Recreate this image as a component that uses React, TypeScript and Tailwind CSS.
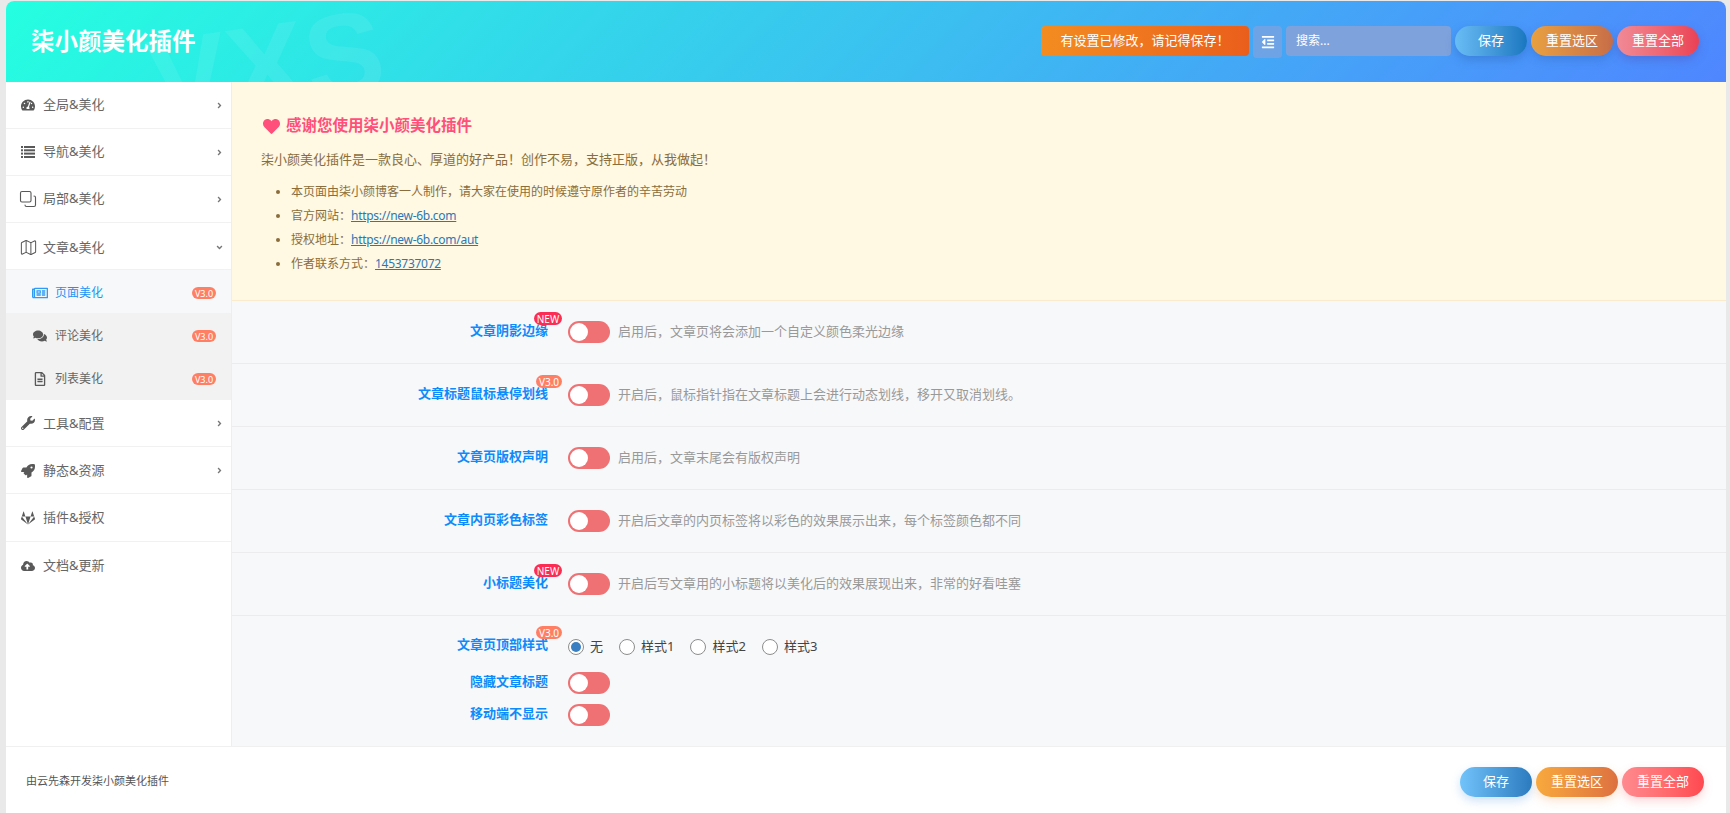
import type { ReactNode } from 'react'
import { Copy, Map as MapIcon } from 'lucide-react'
import { FaAngleDown, FaAngleRight, FaCloudUploadAlt, FaComments, FaGitlab, FaHeart, FaOutdent, FaRegFileAlt, FaRegNewspaper, FaRocket, FaTachometerAlt, FaWrench } from 'react-icons/fa'

const font = "font-['Noto_Sans','Noto_Sans_CJK_SC',sans-serif]"

function NavItem({ icon, label, arrow, tall, className }: { icon: ReactNode; label: string; arrow?: 'right' | 'down'; tall?: boolean; className?: string }) {
  return (
    <div className={`flex items-center border-b border-[#f1f1f1] pl-[15px] pr-[7px] text-[13px] text-[#666] ${tall ? 'h-[47.4px] pt-[1px]' : 'h-[47px]'} ${className ?? ''}`}>
      <span className="flex w-[14px] justify-center text-[14px] text-[#595959] [&>svg]:shrink-0">{icon}</span>
      <span className="ml-[8px] flex-1">{label}</span>
      {arrow === 'right' && <FaAngleRight className="text-[9px] text-[#777]" />}
      {arrow === 'down' && <FaAngleDown className="text-[9px] text-[#777]" />}
    </div>
  )
}

function SubItem({ icon, label, active }: { icon: ReactNode; label: string; active?: boolean }) {
  return (
    <div className={`flex h-[43.2px] items-center pl-[27px] pr-[15px] pt-[3px] text-[12px] ${active ? 'bg-[#f7f8fa] text-[#1c94f4]' : 'bg-[#f2f2f2] text-[#666]'}`}>
      <span className={`flex w-[14px] justify-center [&>svg]:shrink-0 ${active ? 'text-[16px] text-[#2f9bf5]' : 'text-[14px] text-[#595959]'}`}>{icon}</span>
      <span className="ml-[8px] flex-1">{label}</span>
      <span className="flex h-[12px] w-[24px] items-center justify-center rounded-full bg-[#ff7f65] text-[9px] leading-none text-white">V3.0</span>
    </div>
  )
}

function ListIcon() {
  return (
    <svg width="14" height="12" viewBox="0 0 14 12" fill="currentColor">
      <rect x="0" y="0" width="2" height="2" />
      <rect x="3" y="0" width="11" height="2" />
      <rect x="0" y="3.3" width="2" height="2" />
      <rect x="3" y="3.3" width="11" height="2" />
      <rect x="0" y="6.6" width="2" height="2" />
      <rect x="3" y="6.6" width="11" height="2" />
      <rect x="0" y="10" width="2" height="2" />
      <rect x="3" y="10" width="11" height="2" />
    </svg>
  )
}

function Switch() {
  return (
    <span className="flex h-[22px] w-[42px] shrink-0 items-center rounded-full bg-[#ef7174] pl-[2px]">
      <span className="h-[18px] w-[18px] rounded-full bg-white" />
    </span>
  )
}

function Label({ text, badge, className }: { text: string; badge?: 'NEW' | 'V3.0'; className?: string }) {
  return (
    <div className={`flex w-[316px] shrink-0 justify-end ${className ?? ''}`}>
      <span className="relative text-[13px] font-bold leading-[20px] text-[#0d8bfb]">
        {text}
        {badge && (
          <span className={`absolute right-[-14px] top-[-8px] flex h-[13px] items-center justify-center rounded-full text-[10px] font-normal leading-none text-white ${badge === 'NEW' ? 'w-[28px] bg-[#fb2d55]' : 'w-[26px] bg-[#ff7f65]'}`}>
            {badge}
          </span>
        )}
      </span>
    </div>
  )
}

function OptionRow({ label, badge, desc }: { label: string; badge?: 'NEW' | 'V3.0'; desc: string }) {
  return (
    <div className="flex h-[63px] items-center border-b border-[#ececef]">
      <Label text={label} badge={badge} className="pb-[4px]" />
      <div className="ml-[20px]">
        <Switch />
      </div>
      <span className="ml-[8px] text-[13px] text-[#999]">{desc}</span>
    </div>
  )
}

function Radio({ label, checked }: { label: string; checked?: boolean }) {
  return (
    <span className="flex items-center text-[13px] text-[#444]">
      <span className="flex h-[16px] w-[16px] items-center justify-center rounded-full border border-[#8d8d8d] bg-white">
        {checked && <span className="h-[10px] w-[10px] rounded-full bg-[#3a7fc1]" />}
      </span>
      <span className="ml-[6px]">{label}</span>
    </span>
  )
}

function Pill({ label, className }: { label: string; className: string }) {
  return (
    <button className={`h-[30px] rounded-full text-[13px] text-white ${className}`}>{label}</button>
  )
}

function Bullet({ children }: { children: ReactNode }) {
  return (
    <li className="flex items-center">
      <span className="mr-[11px] h-[4px] w-[4px] rounded-full bg-[#8a6d3b]" />
      <span>{children}</span>
    </li>
  )
}

export default function App() {
  return (
    <div className={`h-[813px] overflow-hidden bg-[#e9e9e9] pb-0 pl-[6px] pr-[4px] pt-px ${font}`}>
      <div className="flex h-full flex-col overflow-hidden rounded-t-[8px] bg-white">
        <header className="relative flex h-[81px] shrink-0 items-center justify-between overflow-hidden bg-[linear-gradient(135deg,#25ffe0,#4f86ff)] pl-[25px] pr-[27px]">
          <div className="absolute left-[142px] top-[6px] -rotate-[8deg] select-none font-['Liberation_Sans',sans-serif] text-[118px] font-bold leading-none text-white/[0.08]">VXS</div>
          <h1 className="relative text-[23.5px] font-bold text-white">柒小颜美化插件</h1>
          <div className="relative flex items-start gap-[4px]">
            <div className="flex h-[30px] w-[208px] items-center justify-center rounded-[4px] bg-gradient-to-r from-[#f38c21] to-[#ea5e1c] text-[13px] text-white">有设置已修改，请记得保存！</div>
            <div className="flex h-[32px] w-[29px] items-center justify-center rounded-[4px] bg-[#6ea4e6] text-[14px] text-white">
              <FaOutdent />
            </div>
            <input placeholder="搜索..." className="h-[30px] w-[165px] rounded-[4px] bg-[#7ea2dc] px-[10px] text-[12px] text-white outline-none placeholder:text-white" />
            <Pill label="保存" className="w-[72px] bg-gradient-to-r from-[#69bdf5] to-[#1a78c0] shadow-[0_4px_10px_rgba(40,90,170,0.35)]" />
            <Pill label="重置选区" className="w-[82px] bg-gradient-to-r from-[#e8a040] to-[#c86e48] shadow-[0_4px_10px_rgba(40,90,170,0.3)]" />
            <Pill label="重置全部" className="w-[82px] bg-gradient-to-r from-[#f08a96] to-[#ea4055] shadow-[0_4px_10px_rgba(80,70,170,0.35)]" />
          </div>
        </header>

        <div className="flex min-h-0 flex-1">
          <aside className="w-[226px] shrink-0 border-r border-[#eeeeee] bg-white">
            <NavItem icon={<FaTachometerAlt />} label="全局&美化" arrow="right" />
            <NavItem icon={<ListIcon />} label="导航&美化" arrow="right" />
            <NavItem icon={<Copy size={18} strokeWidth={1.5} className="-scale-x-100 -scale-y-100" />} label="局部&美化" arrow="right" />
            <NavItem icon={<MapIcon size={19} strokeWidth={1.3} />} label="文章&美化" arrow="down" className="pt-[3px]" />
            <SubItem icon={<FaRegNewspaper />} label="页面美化" active />
            <SubItem icon={<FaComments />} label="评论美化" />
            <SubItem icon={<FaRegFileAlt />} label="列表美化" />
            <NavItem tall icon={<FaWrench />} label="工具&配置" arrow="right" />
            <NavItem tall icon={<FaRocket />} label="静态&资源" arrow="right" />
            <NavItem tall icon={<FaGitlab />} label="插件&授权" />
            <div className="[&>div]:border-b-0">
              <NavItem tall icon={<FaCloudUploadAlt />} label="文档&更新" />
            </div>
          </aside>

          <main className="min-w-0 flex-1 bg-[#f7f8fa]">
            <section className="h-[219px] border-b border-[#faebcc] bg-[#fff8e3] pl-[29px] pt-[31px] text-[#8a6d3b]">
              <h2 className="flex h-[26px] items-center text-[15.5px] font-bold text-[#ff4f7b]">
                <FaHeart className="ml-[2px] mr-[6px] text-[17px]" />
                感谢您使用柒小颜美化插件
              </h2>
              <p className="mt-[10px] text-[13px] leading-[20px]">柒小颜美化插件是一款良心、厚道的好产品！创作不易，支持正版，从我做起！</p>
              <ul className="ml-[15px] mt-[11px] text-[12px] leading-[24px]">
                <Bullet>本页面由柒小颜博客一人制作，请大家在使用的时候遵守原作者的辛苦劳动</Bullet>
                <Bullet>官方网站：<a className="tracking-[-0.28px] text-[#2b77b5] underline">https://new-6b.com</a></Bullet>
                <Bullet>授权地址：<a className="tracking-[-0.28px] text-[#2b77b5] underline">https://new-6b.com/aut</a></Bullet>
                <Bullet>作者联系方式：<a className="tracking-[-0.28px] text-[#2b77b5] underline">1453737072</a></Bullet>
              </ul>
            </section>

            <OptionRow label="文章阴影边缘" badge="NEW" desc="启用后，文章页将会添加一个自定义颜色柔光边缘" />
            <OptionRow label="文章标题鼠标悬停划线" badge="V3.0" desc="开启后，鼠标指针指在文章标题上会进行动态划线，移开又取消划线。" />
            <OptionRow label="文章页版权声明" desc="启用后，文章末尾会有版权声明" />
            <OptionRow label="文章内页彩色标签" desc="开启后文章的内页标签将以彩色的效果展示出来，每个标签颜色都不同" />
            <OptionRow label="小标题美化" badge="NEW" desc="开启后写文章用的小标题将以美化后的效果展现出来，非常的好看哇塞" />

            <div className="pt-[20px]">
              <div className="flex h-[22px] items-center">
                <Label text="文章页顶部样式" badge="V3.0" className="pb-[6px]" />
                <div className="ml-[20px] flex gap-[16px]">
                  <Radio label="无" checked />
                  <Radio label="样式1" />
                  <Radio label="样式2" />
                  <Radio label="样式3" />
                </div>
              </div>
              <div className="mt-[14px] flex h-[22px] items-center">
                <Label text="隐藏文章标题" className="pb-[5px]" />
                <div className="ml-[20px]"><Switch /></div>
              </div>
              <div className="mt-[10px] flex h-[22px] items-center">
                <Label text="移动端不显示" className="pb-[5px]" />
                <div className="ml-[20px]"><Switch /></div>
              </div>
            </div>
          </main>
        </div>

        <footer className="flex h-[67px] shrink-0 items-center justify-between border-t border-[#f0f0f0] bg-white pl-[20px] pr-[22px] pt-[4px]">
          <p className="pb-[2px] text-[11px] text-[#555]">由云先森开发柒小颜美化插件</p>
          <div className="flex gap-[4px]">
            <Pill label="保存" className="w-[72px] bg-gradient-to-r from-[#72c3fb] to-[#2b7bbf] shadow-[0_4px_10px_rgba(60,140,220,0.25)]" />
            <Pill label="重置选区" className="w-[82px] bg-gradient-to-r from-[#f8a93d] to-[#dd7140] shadow-[0_4px_10px_rgba(240,150,70,0.25)]" />
            <Pill label="重置全部" className="w-[82px] bg-gradient-to-r from-[#ff8a8f] to-[#ff4850] shadow-[0_4px_10px_rgba(250,90,100,0.25)]" />
          </div>
        </footer>
      </div>
    </div>
  )
}
